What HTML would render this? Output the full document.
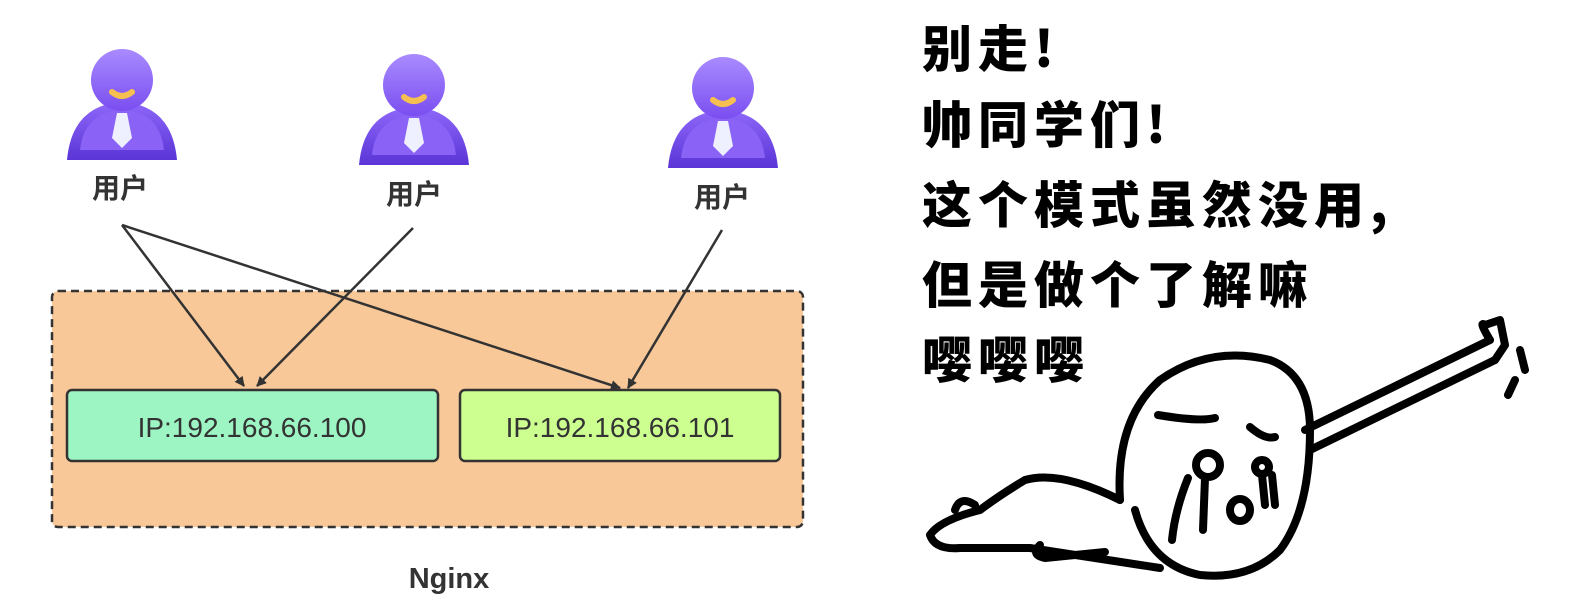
<!DOCTYPE html>
<html><head><meta charset="utf-8"><style>
body{margin:0;width:1594px;height:614px;background:#fff;overflow:hidden;position:relative;font-family:"Liberation Sans","Noto Sans CJK SC",sans-serif}
.t{position:absolute;font-family:"Noto Sans CJK SC","WenQuanYi Zen Hei",sans-serif;font-weight:900;font-size:50px;line-height:60px;color:#000;left:922px;letter-spacing:6px}
</style></head><body>
<svg width="1594" height="614" style="position:absolute;left:0;top:0">
<defs>
<linearGradient id="h" x1="0" y1="0" x2="0" y2="1"><stop offset="0" stop-color="#a98bff"/><stop offset="1" stop-color="#7a4ef0"/></linearGradient>
<linearGradient id="b" x1="0" y1="0" x2="0" y2="1"><stop offset="0" stop-color="#8e68fa"/><stop offset="1" stop-color="#5b35d6"/></linearGradient>
<g id="u">
<path d="M-55 80 Q-50 25 0 22 Q50 25 55 80 Z" fill="url(#b)"/>
<path d="M-42 70 Q-38 32 0 30 Q38 32 42 70 Z" fill="#8a62f6"/>
<circle cx="0" cy="0" r="31" fill="url(#h)"/>
<path d="M-10 12 Q0 20 10 12" stroke="#f5c050" stroke-width="6" fill="none" stroke-linecap="round"/>
<path d="M-5 33 L5 33 L10 58 L0 68 L-10 58 Z" fill="#eef0ff"/>
</g>
<marker id="a" markerWidth="10" markerHeight="10" refX="9" refY="5" orient="auto" markerUnits="userSpaceOnUse" viewBox="0 0 10 10"><path d="M0 0 L10 5 L0 10 Z" fill="#333"/></marker>
</defs>
<use href="#u" x="122" y="80"/>
<use href="#u" x="414" y="85"/>
<use href="#u" x="723" y="88"/>
<rect x="52" y="291" width="751" height="236" rx="6" fill="#f8c898" stroke="#333" stroke-width="2.5" stroke-dasharray="8 5"/>
<rect x="67" y="390" width="371" height="71" rx="5" fill="#9ef5c4" stroke="#333" stroke-width="2.5"/>
<rect x="460" y="390" width="320" height="71" rx="5" fill="#ccff90" stroke="#333" stroke-width="2.5"/>
<text x="252" y="437" font-size="28" text-anchor="middle" fill="#333" font-family="Liberation Sans">IP:192.168.66.100</text>
<text x="620" y="437" font-size="28" text-anchor="middle" fill="#333" font-family="Liberation Sans">IP:192.168.66.101</text>
<text x="449" y="588" font-size="29" font-weight="bold" text-anchor="middle" fill="#333" font-family="Liberation Sans">Nginx</text>
<g font-size="28" font-weight="bold" fill="#333" font-family="Noto Sans CJK SC,sans-serif" text-anchor="middle">
<text x="120" y="198">用户</text><text x="414" y="204">用户</text><text x="722" y="207">用户</text></g>
<g stroke="#333" stroke-width="2.5" fill="none" marker-end="url(#a)">
<line x1="122" y1="225" x2="244" y2="386"/>
<line x1="122" y1="225" x2="620" y2="388"/>
<line x1="413" y1="228" x2="257" y2="386"/>
<line x1="722" y1="230" x2="628" y2="388"/>
</g>
<g stroke="#000" stroke-width="8" fill="none" stroke-linecap="round" stroke-linejoin="round">
<path d="M1120 500 Q1115 420 1160 380 Q1210 345 1270 360 Q1310 375 1310 430 Q1310 510 1280 550 Q1250 580 1200 575 Q1150 565 1135 510"/>
<path d="M1120 500 Q1060 470 1025 480 Q1000 495 980 510 Q940 520 930 535 Q935 550 960 548 L1030 548 L1160 568"/>
<path d="M955 510 Q960 495 975 505"/>
<path d="M1040 545 Q1030 555 1045 558 L1105 552"/>
<path d="M1305 430 L1490 340 M1310 450 L1495 360"/>
<path d="M1490 340 Q1478 320 1485 325 L1500 320 L1505 345 M1495 360 L1505 345"/>
<path d="M1520 350 L1525 370 M1515 380 L1508 395"/>
<path d="M1158 415 Q1200 422 1215 418"/>
<path d="M1250 427 Q1265 440 1275 437"/>
<circle cx="1208" cy="465" r="12"/>
<circle cx="1262" cy="467" r="7"/>
<path d="M1188 478 Q1175 510 1172 540 M1205 478 L1203 530 M1262 475 L1265 505 M1272 475 L1275 505"/>
<ellipse cx="1240" cy="510" rx="10" ry="11"/>
</g>
</svg>
<div class="t" style="top:16px">别走!</div>
<div class="t" style="top:92px">帅同学们!</div>
<div class="t" style="top:172px">这个模式虽然没用,</div>
<div class="t" style="top:252px">但是做个了解嘛</div>
<div class="t" style="top:327px">嘤嘤嘤</div>
</body></html>
